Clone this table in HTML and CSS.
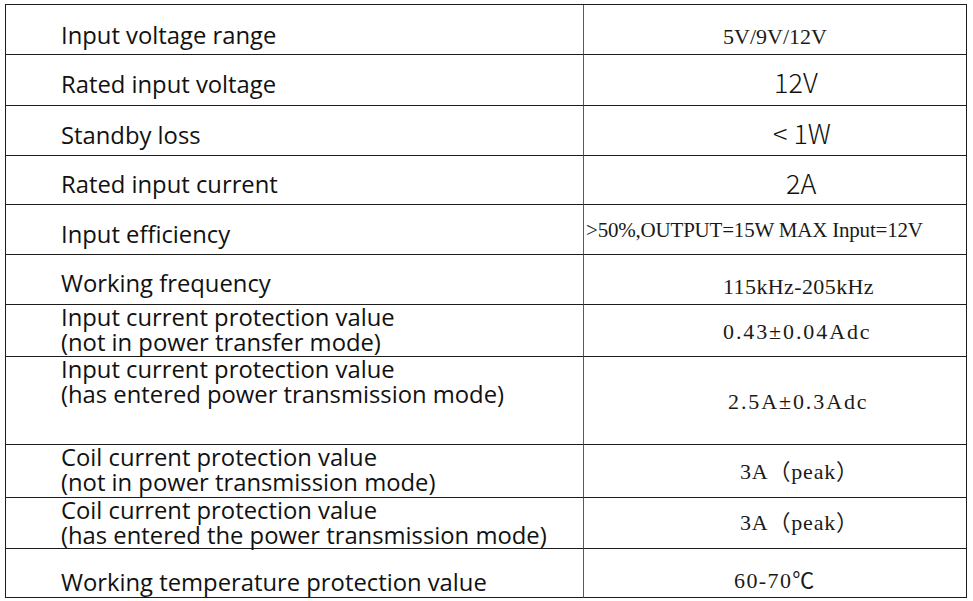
FILE: index.html
```html
<!DOCTYPE html>
<html lang="en">
<head>
<meta charset="utf-8">
<title>Input specifications</title>
<link rel="stylesheet" href="styles.css">
</head>
<body>
<div class="spec">
  <div class="row h50">
    <div class="key pb6">Input voltage range</div>
    <div class="val serif pl139 pb5">5V/9V/12V</div>
  </div>
  <div class="row h51">
    <div class="key pb8">Rated input voltage</div>
    <div class="val sans pl190 pb8">12V</div>
  </div>
  <div class="row h50">
    <div class="key pb7">Standby loss</div>
    <div class="val sans pl189 pb7">&lt; 1W</div>
  </div>
  <div class="row h49">
    <div class="key pb7">Rated input current</div>
    <div class="val sans pl202 pb6">2A</div>
  </div>
  <div class="row h50">
    <div class="key pb7">Input efficiency</div>
    <div class="val serif small pl2 pb12 tight">&gt;50%,OUTPUT=15W MAX Input=12V</div>
  </div>
  <div class="row h50">
    <div class="key pb8">Working frequency</div>
    <div class="val serif pl139 pb5 wide1">115kHz-205kHz</div>
  </div>
  <div class="row h52">
    <div class="key top">Input current protection value<br>(not in power transfer mode)</div>
    <div class="val serif pl139 pb12 wide2">0.43±0.04Adc</div>
  </div>
  <div class="row h88">
    <div class="key top">Input current protection value<br>(has entered power transmission mode)</div>
    <div class="val serif pl144 pb30 wide2">2.5A±0.3Adc</div>
  </div>
  <div class="row h53">
    <div class="key top">Coil current protection value<br>(not in power transmission mode)</div>
    <div class="val serif pl156 pb13 paren">3A（peak）</div>
  </div>
  <div class="row h51">
    <div class="key top">Coil current protection value<br>(has entered the power transmission mode)</div>
    <div class="val serif pl156 pb13 paren">3A（peak）</div>
  </div>
  <div class="row h49">
    <div class="key pb2">Working temperature protection value</div>
    <div class="val serif pl150 pb4 wide3">60-70℃</div>
  </div>
</div>
</body>
</html>
```
FILE: styles.css
```css
html, body {
  margin: 0;
  padding: 0;
  background: #ffffff;
}

.spec {
  margin: 4px 0 0 5px;
  width: 962px;
  box-sizing: border-box;
  border-top: 1px solid #1c1c1c;
  border-left: 1px solid #1c1c1c;
  color: #111111;
}

.row {
  display: grid;
  grid-template-columns: 578px 383px;
}

.h49 { height: 49px; }
.h50 { height: 50px; }
.h51 { height: 51px; }
.h52 { height: 52px; }
.h53 { height: 53px; }
.h88 { height: 88px; }

.key,
.val {
  display: flex;
  flex-direction: column;
  justify-content: flex-end;
  box-sizing: border-box;
  border-bottom: 1px solid #1c1c1c;
  white-space: nowrap;
}

.key {
  border-right: 1px solid #5a5a5a;
  padding-left: 55px;
  font-family: "Open Sans", "Noto Sans", sans-serif;
  font-size: 23.8px;
  line-height: 25px;
}

.key.top {
  display: block;
  padding-top: 0;
}

.val {
  border-right: 1px solid #1c1c1c;
}

.serif {
  font-family: "Liberation Serif", "Noto Sans CJK SC", serif;
  font-size: 22px;
  line-height: 24px;
  color: #1a1a1a;
}

.serif.small {
  font-size: 21px;
}

.sans {
  font-family: "Noto Sans CJK SC", "Noto Sans", sans-serif;
  font-weight: 300;
  font-size: 27px;
  line-height: 30px;
}

.tight { letter-spacing: -0.2px; }
.paren { letter-spacing: 0.8px; }
.wide1 { letter-spacing: 0.4px; }
.wide2 { letter-spacing: 1.9px; }
.wide3 { letter-spacing: 1.4px; }

.pl2 { padding-left: 2px; }
.pl139 { padding-left: 139px; }
.pl144 { padding-left: 144px; }
.pl150 { padding-left: 150px; }
.pl156 { padding-left: 156px; }
.pl189 { padding-left: 189px; }
.pl190 { padding-left: 190px; }
.pl202 { padding-left: 202px; }

.pb2 { padding-bottom: 2px; }
.pb4 { padding-bottom: 4px; }
.pb5 { padding-bottom: 5px; }
.pb6 { padding-bottom: 6px; }
.pb7 { padding-bottom: 7px; }
.pb8 { padding-bottom: 8px; }
.pb12 { padding-bottom: 12px; }
.pb13 { padding-bottom: 13px; }
.pb30 { padding-bottom: 30px; }
```
